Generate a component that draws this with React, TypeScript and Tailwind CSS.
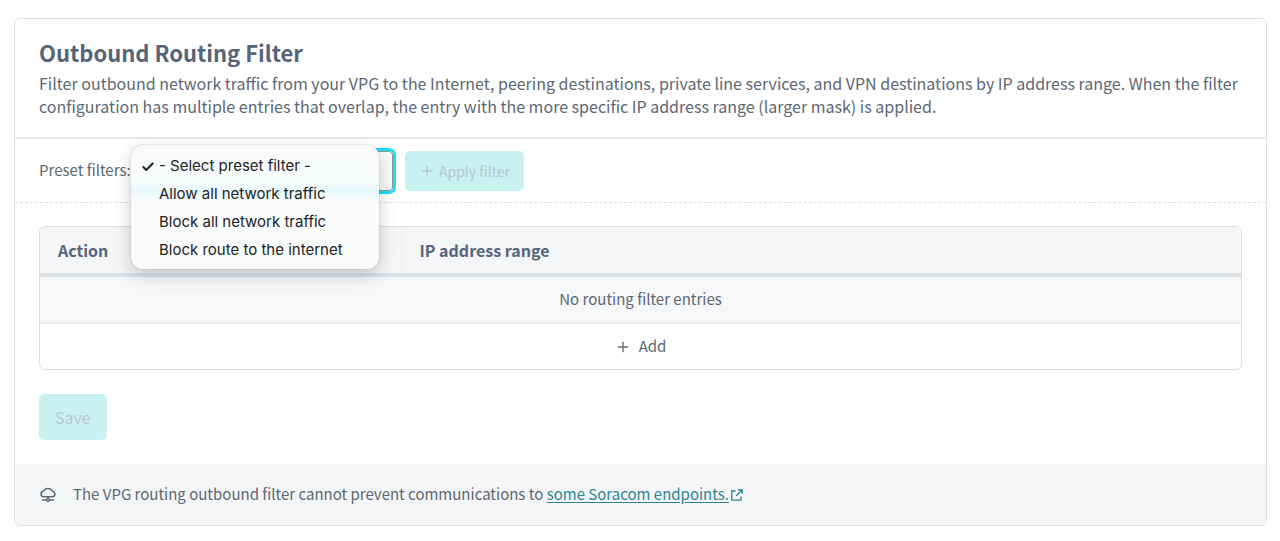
import React, { useState } from 'react';
import { Check, Plus } from 'lucide-react';

const presets = [
  { value: '', label: '- Select preset filter -' },
  { value: 'allow-all', label: 'Allow all network traffic' },
  { value: 'block-all', label: 'Block all network traffic' },
  { value: 'block-internet', label: 'Block route to the internet' },
];

const CloudNetworkIcon: React.FC = () => (
  <svg
    className="h-4 w-[18px] shrink-0"
    viewBox="0 0 18 16"
    fill="none"
    stroke="currentColor"
    strokeWidth="1.5"
    strokeLinecap="round"
    strokeLinejoin="round"
    aria-hidden="true"
  >
    <path d="M5 9.700a2.700 2.700 0 0 1-.4-5.400A4.700 4.700 0 0 1 13.300 4.300a2.700 2.700 0 0 1-.3 5.400z" />
    <path d="M9 9.700v2M3.500 13h4M10.500 13h4" />
    <circle cx="9" cy="13" r="1.400" />
  </svg>
);

const ExternalLinkIcon: React.FC = () => (
  <svg
    className="h-3 w-3 shrink-0"
    viewBox="0 0 12 12"
    fill="none"
    stroke="currentColor"
    strokeWidth="1.3"
    aria-hidden="true"
  >
    <path d="M4.500 2H.8v9.200H10V7.500M7 .8h4.200V5M11 1 5.200 6.800" />
  </svg>
);

const PresetSelect: React.FC = () => {
  const [preset, setPreset] = useState('');
  const [isOpen, setIsOpen] = useState(true);

  const handleSelect = (value: string) => {
    setPreset(value);
    setIsOpen(false);
  };

  return (
    <div className="relative">
      <select
        id="preset-filter"
        value={preset}
        onChange={(e) => setPreset(e.target.value)}
        className="block h-10 w-64 appearance-none rounded-sm border border-[#8f959c] bg-[#fafafa] px-3 text-base outline-3 outline-[#1be0f5]"
      >
        {presets.map((item) => (
          <option key={item.value} value={item.value}>
            {item.label}
          </option>
        ))}
      </select>
      {isOpen && (
        <div
          role="listbox"
          aria-label="Preset filters"
          className="absolute -top-1.5 -left-1.5 z-10 w-62 rounded-xl bg-[linear-gradient(#f8fafa_0%,#f8fbfb_30%,#e6f8fb_37%,#f9fbfb_45%,#f9fafa_100%)] px-1 pt-2 pb-1 font-['Inter',sans-serif] text-[15px] text-[#222426] shadow-[0_0_1px_rgba(0,0,0,0.5),0_6px_18px_rgba(0,0,0,0.2)]"
        >
          {presets.map((item) => (
            <button
              key={item.value}
              type="button"
              role="option"
              aria-selected={item.value === preset}
              onClick={() => handleSelect(item.value)}
              className="flex h-7 w-full items-center gap-1 pl-1.5 text-left"
            >
              <span className="w-3.5 shrink-0">
                {item.value === preset && <Check className="h-3.5 w-3.5" strokeWidth={3.5} aria-hidden="true" />}
              </span>
              {item.label}
            </button>
          ))}
        </div>
      )}
    </div>
  );
};

export default function App() {
  return (
    <main className="bg-white pt-[18px] pr-[13px] pb-4 pl-3.5 font-['Noto_Sans_CJK_JP',sans-serif] text-[15px] text-[#5c6874]">
      <section className="overflow-hidden rounded-md border border-[#dcdfe2]">
        <header className="border-b-2 border-[#e8eaec] px-6 pt-4 pb-[19px]">
          <h1 className="mb-0.5 text-[22px] leading-[35px] font-bold text-[#56657a]">Outbound Routing Filter</h1>
          <p className="text-base leading-[23px]">
            Filter outbound network traffic from your VPG to the Internet, peering destinations, private line services,
            and VPN destinations by IP address range. When the filter configuration has multiple entries that overlap,
            the entry with the more specific IP address range (larger mask) is applied.
          </p>
        </header>

        <div className="flex h-16 items-center border-b border-dashed border-[#dcdfe2] px-6">
          <label htmlFor="preset-filter" className="w-[98px]">
            Preset filters:
          </label>
          <PresetSelect />
          <button
            type="button"
            disabled
            className="ml-3 flex h-10 items-center gap-1 rounded-[5px] bg-[#c9f1f2] px-3.5 text-sm text-[#b7c6cf]"
          >
            <Plus className="h-4 w-4" aria-hidden="true" />
            Apply filter
          </button>
        </div>

        <div className="px-6 pt-[23px] pb-6">
          <div className="overflow-hidden rounded-md border border-[#dcdfe2]">
            <table className="w-full table-fixed">
              <thead>
                <tr className="h-12 border-b-4 border-[#dfe2e5] bg-[#f3f5f7] text-left text-base text-[#56657a]">
                  <th className="w-[361px] border-r border-r-[#eceef0] px-[18px] font-bold">Action</th>
                  <th className="px-[18px] font-bold">IP address range</th>
                </tr>
              </thead>
              <tbody>
                <tr className="h-12 border-b-2 border-[#eceef0] bg-[#f6f7f9]">
                  <td colSpan={2} className="text-center">
                    No routing filter entries
                  </td>
                </tr>
                <tr className="h-[46px]">
                  <td colSpan={2} className="p-0">
                    <button type="button" className="flex w-full items-center justify-center gap-2">
                      <Plus className="h-4 w-4" aria-hidden="true" />
                      Add
                    </button>
                  </td>
                </tr>
              </tbody>
            </table>
          </div>

          <button
            type="button"
            disabled
            className="mt-6 block h-[46px] rounded-[5px] bg-[#c9f1f2] px-4 text-base text-[#b7c6cf]"
          >
            Save
          </button>
        </div>

        <footer className="flex h-[61px] items-center bg-[#f4f5f7] px-6">
          <CloudNetworkIcon />
          <p className="ml-4">
            The VPG routing outbound filter cannot prevent communications to{' '}
            <a href="#endpoints" className="inline-flex items-center gap-0.5 text-[#2b8592]">
              <span className="underline underline-offset-2">some Soracom endpoints.</span>
              <ExternalLinkIcon />
            </a>
          </p>
        </footer>
      </section>
    </main>
  );
}
